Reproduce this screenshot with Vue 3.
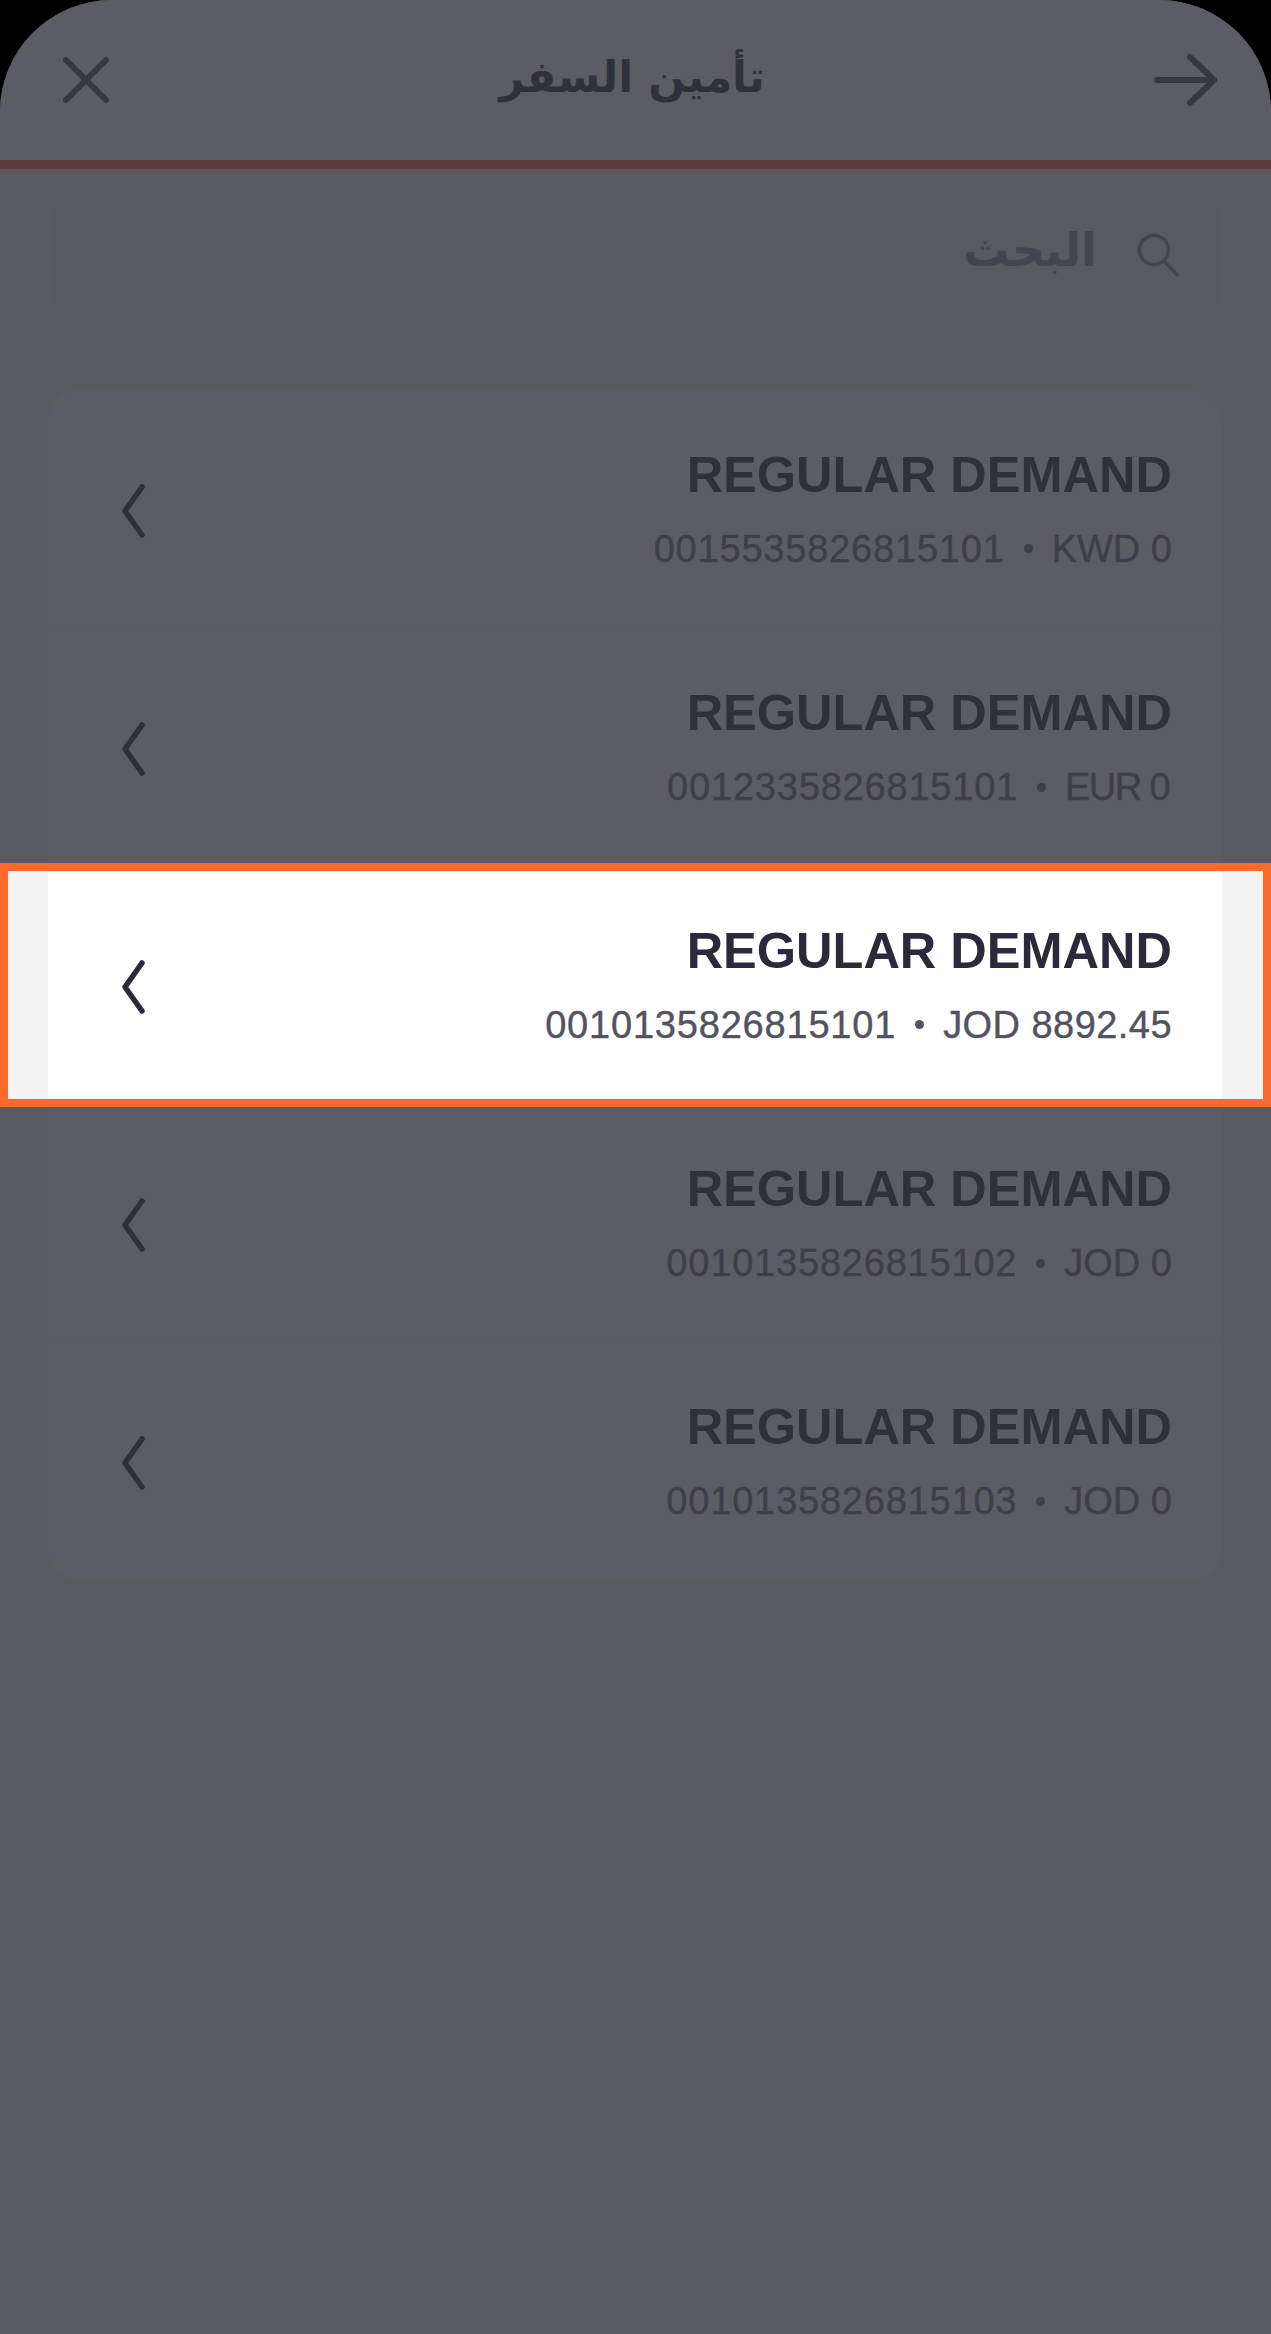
<template>
  <div class="screen" dir="rtl">
    <header class="header">
      <svg class="header__arrow" width="64" height="52" viewBox="0 0 64 52" fill="none" aria-label="back">
        <path d="M3 26H60M36 3L60 26L36 49" />
      </svg>
      <h1 class="header__title">تأمين السفر</h1>
      <svg class="header__close" width="48" height="48" viewBox="0 0 48 48" fill="none" aria-label="close">
        <path d="M4 4L44 44M44 4L4 44" />
      </svg>
    </header>
    <div class="divider"></div>

    <div class="search">
      <svg class="search__icon" width="42" height="44" viewBox="0 0 42 44" fill="none">
        <circle cx="17" cy="17" r="14.5" />
        <path d="M28 29L40 42" />
      </svg>
      <span class="search__label">البحث</span>
    </div>

    <ul class="list">
      <li
        v-for="account in accounts"
        :key="account.number"
        class="row"
        :class="{ 'row--active': account.active }"
      >
        <div class="row__text">
          <div class="row__title">REGULAR DEMAND</div>
          <div class="row__sub" dir="ltr">
            <span class="row__number">{{ account.number }}</span>
            <span class="row__dot"></span>
            <span class="row__balance" :class="{ 'row__balance--tight': account.tight }">{{ account.balance }}</span>
          </div>
        </div>
        <svg class="row__chevron" width="23" height="54" viewBox="0 0 23 54" fill="none">
          <path d="M20 3L3 27L20 51" />
        </svg>
      </li>
    </ul>
  </div>
</template>

<script setup>
const accounts = [
  { number: "0015535826815101", balance: "KWD 0" },
  { number: "0012335826815101", balance: "EUR 0", tight: true },
  { number: "0010135826815101", balance: "JOD 8892.45", active: true },
  { number: "0010135826815102", balance: "JOD 0" },
  { number: "0010135826815103", balance: "JOD 0" },
];
</script>

<style>
html,
body {
  margin: 0;
  background: #000;
}
</style>

<style scoped>
.screen {
  width: 1271px;
  height: 2334px;
  box-sizing: border-box;
  overflow: hidden;
  background: #5a5a63;
  border-radius: 112px 112px 0 0;
  font-family: "Liberation Sans", Arial, sans-serif;
}

/* Header */
.header {
  height: 160px;
  box-sizing: border-box;
  padding: 0 53px 0 62px;
  display: flex;
  align-items: center;
  justify-content: space-between;
  background: #5c5c66;
}

.header__title {
  margin: 0 0 4px;
  font-family: "DejaVu Sans", sans-serif;
  font-size: 43.5px;
  font-weight: 700;
  line-height: 1;
  color: #30303d;
}

.header__arrow path,
.header__close path {
  stroke: #373743;
  stroke-width: 6;
  stroke-linecap: round;
  stroke-linejoin: round;
}

.divider {
  height: 9px;
  background: #5c3a3a;
}

/* Search */
.search {
  margin: 24px 51px 0 52px;
  height: 124px;
  box-sizing: border-box;
  padding-right: 41px;
  display: flex;
  align-items: center;
  gap: 40px;
  background: #595962;
  border-radius: 22px;
}

.search__icon circle,
.search__icon path {
  stroke: #44444f;
  stroke-width: 3.5;
  stroke-linecap: round;
}

.search__label {
  margin-bottom: 10px;
  font-family: "DejaVu Sans", sans-serif;
  font-size: 46px;
  font-weight: 700;
  color: #44444f;
}

/* Accounts */
.list {
  list-style: none;
  margin: 73px 49px 0 48px;
  padding: 0;
  background: #5c5c66;
  border-radius: 30px;
}

.row {
  position: relative;
  height: 238px;
  box-sizing: border-box;
  padding: 0 50px 0 74px;
  display: flex;
  align-items: center;
  justify-content: space-between;
  border-top: 1px solid #5a5a64;
}

.row:first-child {
  border-top: 0;
}

.row__text {
  text-align: right;
  margin-top: -2px;
}

.row__title {
  font-size: 50.5px;
  font-weight: 700;
  line-height: 60px;
  color: #30303d;
}

.row__sub {
  margin-top: 21px;
  display: flex;
  justify-content: flex-end;
  align-items: center;
  gap: 19px;
  font-size: 38px;
  line-height: 46px;
  color: #3e3e4a;
  -webkit-text-stroke: 0.4px currentColor;
}

.row__number {
  letter-spacing: 0.8px;
}

.row__balance--tight {
  letter-spacing: -1.6px;
  margin-right: 3px;
}

.row__dot {
  width: 9px;
  height: 9px;
  border-radius: 50%;
  background: currentColor;
}

.row__chevron {
  margin-top: 3px;
}

.row__chevron path {
  stroke: #2f2f3c;
  stroke-width: 5.5;
  stroke-linecap: round;
  stroke-linejoin: round;
}

/* Highlighted account, lit above the dimmed page */
.row--active {
  border-top: 0;
  z-index: 1;
  background: #fff;
}

.row--active::before {
  content: "";
  position: absolute;
  z-index: -1;
  top: -3px;
  bottom: -3px;
  left: -48px;
  right: -49px;
  border: 8px solid #ff6a2b;
  background: #f3f3f3;
}

.row--active::after {
  content: "";
  position: absolute;
  z-index: -1;
  inset: 5px 0;
  background: #fff;
}

.row--active .row__title {
  color: #2a2a3a;
}

.row--active .row__sub {
  color: #53535f;
}

.row--active .row__balance {
  letter-spacing: 0.45px;
}

.row--active .row__chevron path {
  stroke: #2a2a3a;
}
</style>
